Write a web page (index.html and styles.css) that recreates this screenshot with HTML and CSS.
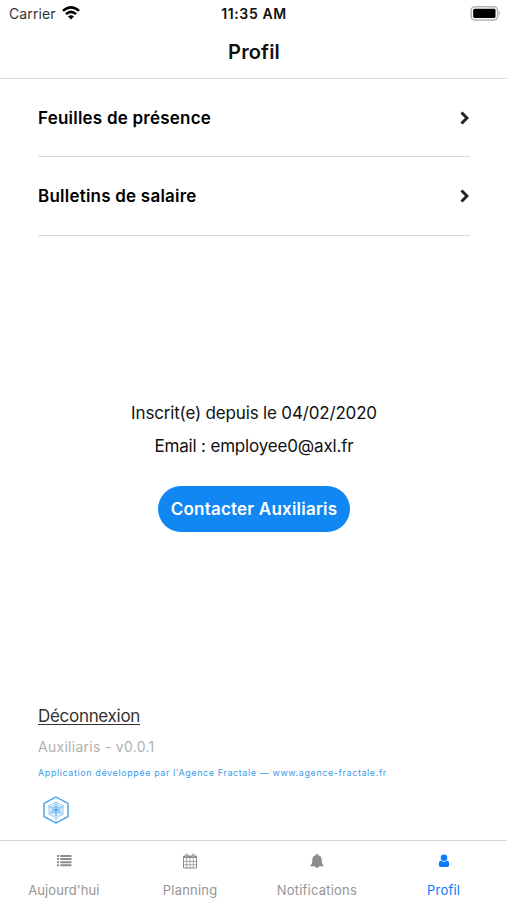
FILE: index.html
```html
<!DOCTYPE html>
<html lang="fr">
<head>
<meta charset="utf-8">
<title>Profil</title>
<link rel="stylesheet" href="styles.css">
</head>
<body>
<div class="app">
  <header class="header">
    <div class="status">
      <div class="carrier"><span>Carrier</span>
        <svg class="wifi" viewBox="0 0 18 14" width="18" height="14"><g fill="none" stroke="#000" stroke-width="2.5"><path d="M.9 4.9Q9-2.2 17.1 4.9"/><path d="M3.9 8.1Q9 3.6 14.1 8.1"/></g><path d="M6 10.5Q9 8.2 12 10.5L9 13.6Z"/></svg>
      </div>
      <span class="time">11:35 AM</span>
      <svg class="battery" viewBox="0 0 31 15" width="31" height="15"><rect x="1.2" y=".8" width="26.4" height="13.2" rx="3.6" fill="#fff" stroke="#b4b4b4" stroke-width="1.5"/><rect x="3.2" y="2.8" width="22.3" height="9.2" rx="1.5"/><path d="M29 5.2Q31 7.4 29 9.6Z" fill="#aaa"/></svg>
    </div>
    <h1 class="title">Profil</h1>
  </header>
  <main class="content">
    <nav class="menu">
      <a class="row"><span>Feuilles de présence</span><svg class="chevron" viewBox="0 0 9 14" width="9" height="14"><path d="M1.5 1.5L7 7L1.5 12.5"/></svg></a>
      <a class="row"><span>Bulletins de salaire</span><svg class="chevron" viewBox="0 0 9 14" width="9" height="14"><path d="M1.5 1.5L7 7L1.5 12.5"/></svg></a>
    </nav>
    <section class="info">
      <p>Inscrit(e) depuis le 04/02/2020</p>
      <p>Email : employee0@axl.fr</p>
      <button class="contact">Contacter Auxiliaris</button>
    </section>
    <footer class="about">
      <a class="logout">Déconnexion</a>
      <span class="version">Auxiliaris - v0.0.1</span>
      <span class="credit">Application développée par l'Agence Fractale — www.agence-fractale.fr</span>
      <svg class="logo" viewBox="0 0 26 28" width="26" height="28" fill="none" stroke="#3f9eea"><path stroke-width="1.4" d="M13 1L25 7.5V20.5L13 27L1 20.5V7.5Z"/><path stroke-width=".7" opacity=".85" d="M13 6L20 10V18L13 22L6 18V10ZM13 8.2L18 11.1V16.9L13 19.8L8 16.9V11.1Z"/><path stroke-width="1" d="M13 10.5L16 12.2V15.8L13 17.5L10 15.8V12.2Z"/><path stroke-width=".6" opacity=".85" d="M13 6V27M5 9.5L20 18M21 9.5L6 18"/><circle cx="13" cy="14" r="1.2" fill="#3f9eea"/></svg>
    </footer>
  </main>
  <nav class="tabs">
    <a class="tab"><svg viewBox="0 0 16 16" width="16" height="16" fill="#8c8c8c"><path d="M1 2h2.1v2H1zM4.3 2h11.2v2H4.3zM1 5.1h2.1v2H1zM4.3 5.1h11.2v2H4.3zM1 8.2h2.1v2H1zM4.3 8.2h11.2v2H4.3zM1 11.3h2.1v2H1zM4.3 11.3h11.2v2H4.3z"/></svg><span>Aujourd'hui</span></a>
    <a class="tab"><svg viewBox="0 0 16 16" width="16" height="16" fill="none" stroke="#8c8c8c"><path d="M1.5 3H14.5V15H1.5Z"/><path stroke-width="2" d="M1.5 4H14.5"/><path stroke-width=".7" d="M4.7 5V15M8 5V15M11.3 5V15M1.5 8.5H14.5M1.5 11.7H14.5"/><rect x="3.8" y="1" width="1.8" height="3.2" rx=".8" fill="#fff"/><rect x="10.4" y="1" width="1.8" height="3.2" rx=".8" fill="#fff"/></svg><span>Planning</span></a>
    <a class="tab"><svg viewBox="0 0 16 16" width="16" height="16" fill="#8c8c8c"><path d="M7.2.8H8.8V2C11.7 2.5 12.7 4.6 12.7 6.8C12.7 10 13.3 11.4 14.6 12.5V13.3H1.4V12.5C2.7 11.4 3.3 10 3.3 6.8C3.3 4.6 4.3 2.5 7.2 2ZM6.2 13.3H9.8A1.8 1.8 0 0 1 6.2 13.3Z"/></svg><span>Notifications</span></a>
    <a class="tab active"><svg viewBox="0 0 16 16" width="16" height="16" fill="#087bff"><circle cx="8" cy="4.8" r="3.3"/><path d="M5 7.5C3.3 7.7 2.8 9.3 2.8 11.8C2.8 13.2 3.6 14 4.8 14H11.2C12.4 14 13.2 13.2 13.2 11.8C13.2 9.3 12.7 7.7 11 7.5C9.3 9.1 6.7 9.1 5 7.5Z"/></svg><span>Profil</span></a>
  </nav>
</div>
</body>
</html>
```
FILE: styles.css
```css
* { box-sizing: border-box; }
body { margin: 0; background: #fff; color: #111; font-family: Inter, "Liberation Sans", sans-serif; }
.app { height: 900px; display: flex; flex-direction: column; }
.header { height: 79px; border-bottom: 1px solid #dcdcdc; }
.status { height: 27px; display: grid; grid-template-columns: 1fr auto 1fr; align-items: center; padding: 0 6px 0 9px; }
.carrier { display: flex; align-items: center; gap: 6px; font-size: 14px; letter-spacing: .1px; color: #333; }
.wifi { margin-top: -1px; }
.time { font-size: 14px; font-weight: 600; letter-spacing: .6px; margin-left: -2px; }
.battery { justify-self: end; }
.title { margin: 0; height: 50px; line-height: 50px; padding-left: 1px; text-align: center; font-size: 20px; font-weight: 600; letter-spacing: .15px; }
.content { flex: 1; min-height: 0; padding: 0 37px 0 38px; display: flex; flex-direction: column; }
.row { height: 78px; border-bottom: 1px solid #dadada; display: flex; align-items: center; justify-content: space-between; font-size: 17px; font-weight: 600; letter-spacing: .22px; color: #000; }
.row + .row { height: 79px; }
.chevron { margin-right: 1px; fill: none; stroke: #222; stroke-width: 3; }
.info { margin-top: 160px; display: flex; flex-direction: column; align-items: center; }
.info p { margin: 0; height: 33px; line-height: 34px; font-size: 17px; letter-spacing: -.17px; }
.contact { margin-top: 24px; width: 192px; height: 46px; padding: 0; border: 0; border-radius: 23px; background: #1087f3; color: #fff; font: 600 17px Inter, sans-serif; letter-spacing: .22px; white-space: nowrap; }
.about { margin-top: auto; display: flex; flex-direction: column; align-items: flex-start; padding-bottom: 16px; }
.logout { font-size: 17px; line-height: 22px; letter-spacing: -.3px; color: #333; text-decoration: underline; text-underline-offset: 2px; text-decoration-thickness: 1px; }
.version { margin-top: 10px; font-size: 14px; line-height: 20px; letter-spacing: .28px; color: #b0b0b0; }
.credit { margin-top: 9px; font-size: 9px; line-height: 14px; color: #3b9bea; letter-spacing: .59px; white-space: nowrap; }
.logo { margin: 16px 0 0 5px; }
.tabs { height: 60px; border-top: 1px solid #d4d4d4; display: grid; grid-template-columns: repeat(4, 1fr); }
.tab { display: flex; flex-direction: column; align-items: center; padding-top: 12px; font-size: 13px; line-height: 18px; letter-spacing: .2px; color: #959595; }
.tab span { margin-top: 12px; }
.tab:first-child { padding-left: 1px; letter-spacing: .1px; }
.tab.active { color: #087bff; }
```
